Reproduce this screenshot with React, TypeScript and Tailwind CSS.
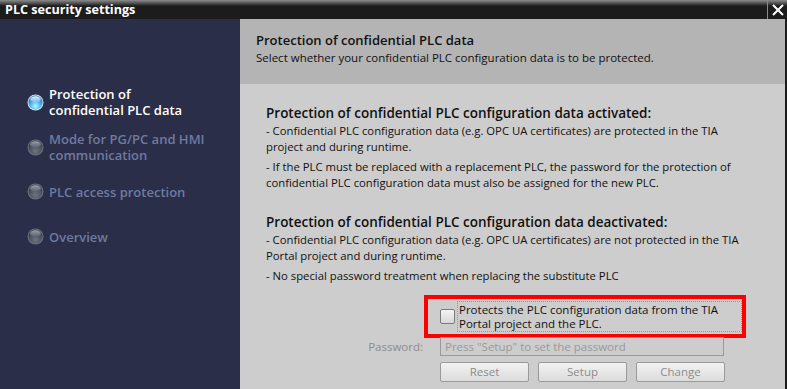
import React from "react";

const font = { fontFamily: '"Open Sans", "Noto Sans", sans-serif' };

function Radio({ active, id }: { active?: boolean; id: string }) {
  const c1 = active ? "#bff2ff" : "#70747f";
  const c2 = active ? "#4cb8ee" : "#535766";
  const c3 = active ? "#2670b0" : "#3c4050";
  const hl = active ? "#ffffff" : "#a4a8b2";
  return (
    <svg width="17" height="17" viewBox="0 0 17 17" className="shrink-0 block">
      <defs>
        <radialGradient id={id} cx="50%" cy="75%" r="65%">
          <stop offset="0%" stopColor={c1} />
          <stop offset="55%" stopColor={c2} />
          <stop offset="100%" stopColor={c3} />
        </radialGradient>
        <linearGradient id={id + "h"} x1="0" y1="0" x2="0" y2="1">
          <stop offset="0%" stopColor={hl} stopOpacity="0.95" />
          <stop offset="100%" stopColor={hl} stopOpacity="0.15" />
        </linearGradient>
      </defs>
      <circle cx="8.5" cy="8.5" r="8" fill={active ? "#cfe4f2" : "#6c7080"} />
      <circle cx="8.5" cy="8.5" r="7" fill={`url(#${id})`} />
      <ellipse cx="8.5" cy="5.3" rx="5.3" ry="3" fill={`url(#${id}h)`} />
    </svg>
  );
}

export default function App() {
  const inactive = "text-[#6e7aa0] text-[13px] leading-[16px] font-semibold";
  const body = "text-[11.3px] leading-[16px] whitespace-nowrap";
  return (
    <div className="w-[787px] h-[389px] overflow-hidden flex flex-col bg-[#1c1c1c]" style={font}>
      {/* title bar */}
      <div className="h-[19px] shrink-0 flex items-stretch bg-[linear-gradient(#8c8c8c_0px,#555_3px,#1c1c1c_6px,#1c1c1c_100%)]">
        <div className="flex-1 pl-[5px] text-white font-bold text-[12.6px] leading-[19px]">
          PLC security settings
        </div>
        <div className="w-[20px] border-l border-[#8a8a8a] flex items-center justify-center">
          <svg width="14" height="14" viewBox="0 0 14 14">
            <path d="M2 2 L12 12 M12 2 L2 12" stroke="#fff" strokeWidth="2" />
          </svg>
        </div>
      </div>
      <div className="flex flex-1 min-h-0">
        {/* sidebar */}
        <div className="w-[240px] shrink-0 bg-[#2a2e48] pt-[67px] pl-[27px] flex flex-col">
          <div className="flex items-center gap-[5px]">
            <Radio active id="r1" />
            <div className="text-white text-[13px] leading-[16px] font-semibold">
              Protection of<br />confidential PLC data
            </div>
          </div>
          <div className="flex items-center gap-[5px] mt-[13px]">
            <Radio id="r2" />
            <div className={inactive}>
              Mode for PG/PC and HMI<br />communication
            </div>
          </div>
          <div className="flex items-center gap-[5px] mt-[20px]">
            <Radio id="r3" />
            <div className={inactive}>PLC access protection</div>
          </div>
          <div className="flex items-center gap-[5px] mt-[28px]">
            <Radio id="r4" />
            <div className={inactive}>Overview</div>
          </div>
        </div>
        {/* main */}
        <div className="flex-1 flex flex-col bg-[#cdcdcd] border-r-2 border-[#1c1c1c] text-[#111]">
          <div className="h-[65px] shrink-0 bg-[#b4b4b4] pl-[16px] pt-[12px]">
            <div className="text-[13px] leading-[18px] font-semibold">Protection of confidential PLC data</div>
            <div className="text-[11.5px] leading-[17px]">Select whether your confidential PLC configuration data is to be protected.</div>
          </div>
          <div className="pl-[26px] pt-[20px]">
            <div className="text-[13.5px] leading-[19px] font-semibold whitespace-nowrap">Protection of confidential PLC configuration data activated:</div>
            <div className={body}>
              - Confidential PLC configuration data (e.g. OPC UA certificates) are protected in the TIA<br />project and during runtime.
            </div>
            <div className={body + " mt-[4px]"}>
              - If the PLC must be replaced with a replacement PLC, the password for the protection of<br />confidential PLC configuration data must also be assigned for the new PLC.
            </div>
            <div className="text-[13.5px] leading-[19px] font-semibold mt-[22px] whitespace-nowrap">Protection of confidential PLC configuration data deactivated:</div>
            <div className={body}>
              - Confidential PLC configuration data (e.g. OPC UA certificates) are not protected in the TIA<br />Portal project and during runtime.
            </div>
            <div className={body + " mt-[4px]"}>- No special password treatment when replacing the substitute PLC</div>
          </div>
          <div className="mt-[11px]">
            <div className="ml-[184px] w-[322px] h-[43px] border-[4px] border-[#ff0000] flex items-center pl-[12px]">
              <div className="w-[15px] h-[15px] rounded-[2px] border border-[#7a7a7a] bg-[linear-gradient(#f4f4f4,#d8d8d8)] shrink-0" />
              <div className="ml-[2px] w-[285px] h-[31px] border border-dotted border-[#8f96b0] text-[11.5px] leading-[14px] pl-[1px] pt-[1px] whitespace-nowrap">
                Protects the PLC configuration data from the TIA<br />Portal project and the PLC.
              </div>
            </div>
            <div className="flex items-center mt-[-1px]">
              <div className="w-[183px] text-right text-[11.5px] text-[#8c8c8c]">Password:</div>
              <div className="w-[284px] h-[19px] border border-[#9a9a9a] ml-[17px] text-[11.5px] leading-[17px] text-[#9a9a9a] pl-[4px]">
                Press "Setup" to set the password
              </div>
            </div>
            <div className="flex gap-[9px] ml-[200px] mt-[6px]">
              {["Reset", "Setup", "Change"].map((b) => (
                <div key={b} className="w-[89px] h-[20px] border border-[#9a9a9a] rounded-[2px] bg-[linear-gradient(#f2f2f2,#dcdcdc)] text-center text-[11.5px] leading-[18px] text-[#8c8c8c]">
                  {b}
                </div>
              ))}
            </div>
          </div>
        </div>
      </div>
    </div>
  );
}
